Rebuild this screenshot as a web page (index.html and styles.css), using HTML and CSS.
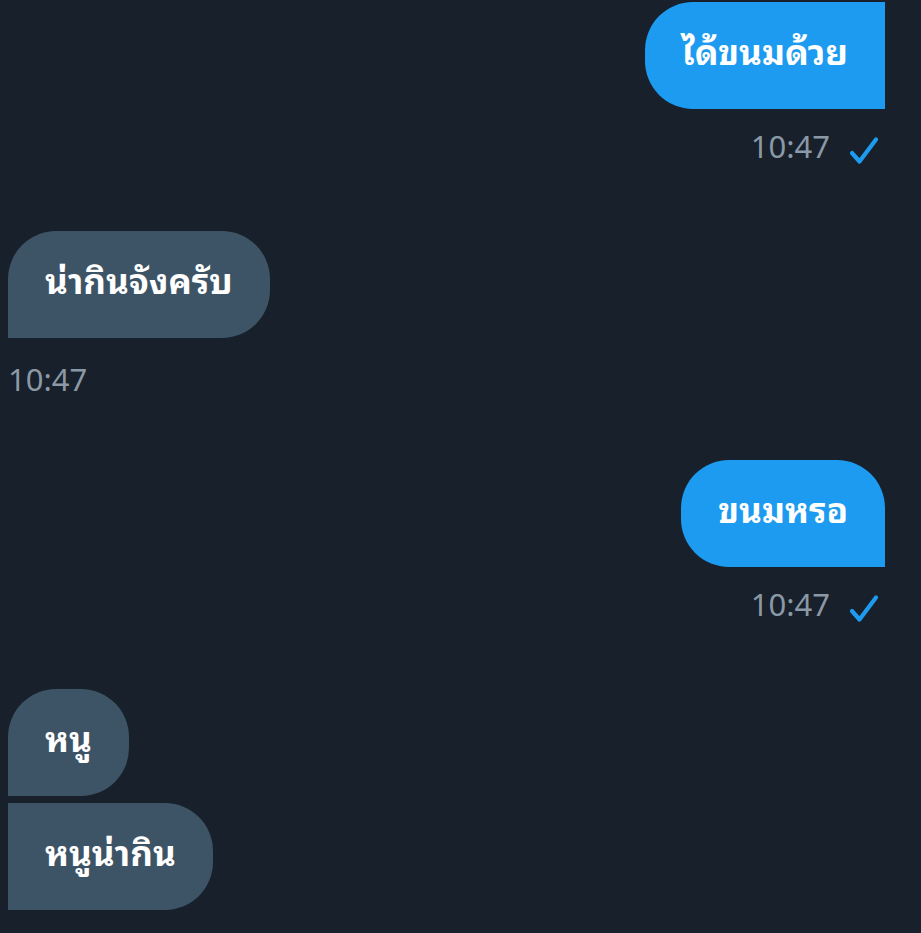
FILE: index.html
```html
<!DOCTYPE html>
<html lang="th">
<head>
<meta charset="utf-8">
<title>Messages</title>
<link rel="stylesheet" href="styles.css">
</head>
<body>
<main class="thread">
  <div class="group sent">
    <div class="bubble sent-bubble mid">ได้ขนมด้วย</div>
    <div class="meta">
      <span class="time">10:47</span>
      <svg class="check" viewBox="0 0 30 30" width="30" height="30" aria-hidden="true"><path d="M3 17 L10.5 25.5 L27 3.5" fill="none" stroke="#1d9bf0" stroke-width="4.2" stroke-linecap="round" stroke-linejoin="round"/></svg>
    </div>
  </div>

  <div class="group received">
    <div class="bubble recv-bubble first">น่ากินจังครับ</div>
    <div class="meta">
      <span class="time">10:47</span>
    </div>
  </div>

  <div class="group sent">
    <div class="bubble sent-bubble last">ขนมหรอ</div>
    <div class="meta">
      <span class="time">10:47</span>
      <svg class="check" viewBox="0 0 30 30" width="30" height="30" aria-hidden="true"><path d="M3 17 L10.5 25.5 L27 3.5" fill="none" stroke="#1d9bf0" stroke-width="4.2" stroke-linecap="round" stroke-linejoin="round"/></svg>
    </div>
  </div>

  <div class="group received">
    <div class="bubble recv-bubble first">หนู</div>
    <div class="bubble recv-bubble mid">หนูน่ากิน</div>
  </div>
</main>
</body>
</html>
```

FILE: styles.css
```css
html, body {
  margin: 0;
  padding: 0;
  background: #17202b;
  height: 100%;
}

body {
  font-family: "Noto Sans Thai Looped", "Noto Looped Thai", "Noto Looped Thai UI", "Loma", "Garuda", "Norasi", "Noto Serif Thai", "Noto Sans Thai", "Noto Sans", sans-serif;
  color: #ffffff;
  overflow: hidden;
}

.thread {
  display: flex;
  flex-direction: column;
  padding: 2px 36px 0 8px;
}

.group {
  display: flex;
  flex-direction: column;
  gap: 7px;
}

.group.sent {
  align-items: flex-end;
}

.group.received {
  align-items: flex-start;
}

.group + .group {
  margin-top: 65px;
}

.bubble {
  font-size: 35px;
  font-weight: 700;
  line-height: 45px;
  padding: 25px 37px 37px;
  white-space: nowrap;
}

.sent-bubble {
  background: #1d9bf0;
}

.recv-bubble {
  background: #3d5466;
}

.sent-bubble.mid {
  border-radius: 48px 0 0 48px;
}

.sent-bubble.last {
  border-radius: 48px 48px 0 48px;
}

.recv-bubble.first {
  border-radius: 48px 48px 48px 0;
}

.recv-bubble.mid {
  border-radius: 0 48px 48px 0;
}

.meta {
  display: flex;
  align-items: center;
  gap: 19px;
  margin-top: 5px;
  padding-right: 6px;
}

.group.received .meta {
  margin-top: 14px;
  padding-right: 0;
}

.time {
  font-size: 31px;
  line-height: 36px;
  color: #8b98a5;
}

.check {
  display: block;
  margin-top: 15px;
}
```
